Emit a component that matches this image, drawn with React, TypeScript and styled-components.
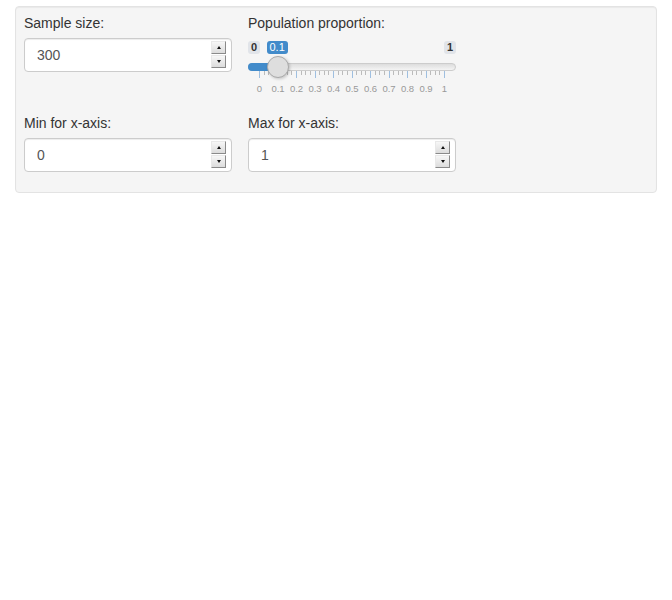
import React from "react";
import styled, { createGlobalStyle } from "styled-components";

const GlobalStyle = createGlobalStyle`
  html, body {
    margin: 0;
    padding: 0;
    background: #ffffff;
    font-family: "Liberation Sans", Arial, sans-serif;
    color: #333333;
  }
`;

const Page = styled.div`
  padding: 6px 15px 0 15px;
`;

const Well = styled.div`
  background: #f5f5f5;
  border: 1px solid #e3e3e3;
  border-radius: 4px;
  padding: 6px 8px 20px 8px;
  box-shadow: inset 0 1px 1px rgba(0, 0, 0, 0.05);
`;

const Grid = styled.div`
  display: grid;
  grid-template-columns: 208px 208px;
  column-gap: 16px;
  row-gap: 18px;
`;

const Field = styled.div`
  display: flex;
  flex-direction: column;
`;

const Label = styled.label`
  font-size: 14px;
  line-height: 20px;
  margin-bottom: 5px;
  color: #333;
`;

const InputBox = styled.div`
  position: relative;
  height: 34px;
  box-sizing: border-box;
  border: 1px solid #cccccc;
  border-radius: 4px;
  background: #fff;
  box-shadow: inset 0 1px 1px rgba(0, 0, 0, 0.075);
  display: flex;
  align-items: center;
`;

const Input = styled.input`
  border: none;
  outline: none;
  background: transparent;
  font: 14px "Liberation Sans", Arial, sans-serif;
  color: #555;
  padding: 0 12px;
  width: 100%;
  height: 100%;
  box-sizing: border-box;
`;

const Spinner = styled.div`
  position: absolute;
  right: 5px;
  top: 2px;
  display: flex;
  flex-direction: column;
  gap: 1px;
`;

const SpinBtn = styled.div<{ $down?: boolean }>`
  width: 15px;
  height: 13px;
  box-sizing: border-box;
  background: linear-gradient(#f7f7f7, #dcdcdc);
  border-top: 1px solid #e8e8e8;
  border-left: 1px solid #e8e8e8;
  border-right: 1px solid #8a8a8a;
  border-bottom: 1px solid #8a8a8a;
  display: flex;
  align-items: center;
  justify-content: center;

  &::after {
    content: "";
    width: 0;
    height: 0;
    border-left: 2px solid transparent;
    border-right: 2px solid transparent;
    ${(p) =>
      p.$down
        ? "border-top: 3px solid #111;"
        : "border-bottom: 3px solid #111;"}
  }
`;

const Slider = styled.div`
  position: relative;
  height: 57px;
  width: 208px;
`;

const Bubble = styled.span<{ $active?: boolean }>`
  position: absolute;
  top: 3px;
  height: 13px;
  line-height: 13px;
  padding: 0 3px;
  font-size: 11px;
  border-radius: 3px;
  background: ${(p) => (p.$active ? "#428bca" : "#e1e4e9")};
  color: ${(p) => (p.$active ? "#fff" : "#333")};
  font-weight: ${(p) => (p.$active ? "normal" : "bold")};
`;

const Track = styled.div`
  position: absolute;
  top: 25px;
  left: 0;
  right: 0;
  height: 8px;
  box-sizing: border-box;
  border: 1px solid #cccccc;
  border-radius: 4px;
  background: linear-gradient(#dddddd, #f4f4f4);
`;

const Bar = styled.div`
  position: absolute;
  top: 25px;
  left: 0;
  height: 8px;
  border-radius: 4px 0 0 4px;
  background: #428bca;
`;

const Handle = styled.div`
  position: absolute;
  top: 18px;
  width: 22px;
  height: 22px;
  box-sizing: border-box;
  border-radius: 50%;
  border: 1px solid #aaaaaa;
  background: #dedede;
  box-shadow: 1px 1px 3px rgba(0, 0, 0, 0.2);
`;

const Tick = styled.span<{ $major?: boolean }>`
  position: absolute;
  top: 33px;
  width: 1px;
  height: ${(p) => (p.$major ? 7 : 4)}px;
  background: ${(p) => (p.$major ? "#9fbfe0" : "#bbbbbb")};
`;

const TickText = styled.span`
  position: absolute;
  top: 45px;
  width: 30px;
  margin-left: -15px;
  text-align: center;
  font-size: 9.5px;
  line-height: 11px;
  color: #999999;
`;

const NumberField = ({ label, value }: { label: string; value: string }) => (
  <Field>
    <Label>{label}</Label>
    <InputBox>
      <Input type="text" defaultValue={value} />
      <Spinner>
        <SpinBtn />
        <SpinBtn $down />
      </Spinner>
    </InputBox>
  </Field>
);

const GRID_START = 11;
const GRID_END = 196;
const pos = (v: number) => GRID_START + (GRID_END - GRID_START) * v;

const ProportionSlider = ({ value }: { value: number }) => {
  const ticks = [];
  for (let i = 0; i <= 40; i++) {
    const major = i % 4 === 0;
    ticks.push(
      <Tick key={i} $major={major} style={{ left: Math.round(pos(i / 40)) }} />
    );
  }
  const labels = [];
  for (let i = 0; i <= 10; i++) {
    labels.push(
      <TickText key={i} style={{ left: pos(i / 10) + 0.5 }}>
        {i === 0 ? "0" : i === 10 ? "1" : (i / 10).toFixed(1)}
      </TickText>
    );
  }
  const x = pos(value);
  return (
    <Slider>
      <Bubble style={{ left: 0 }}>0</Bubble>
      <Bubble style={{ right: 0 }}>1</Bubble>
      <Bubble $active style={{ left: x - 11 }}>
        {value}
      </Bubble>
      <Track />
      <Bar style={{ width: x }} />
      {ticks}
      {labels}
      <Handle style={{ left: x - 11 }} />
    </Slider>
  );
};

export default function App() {
  return (
    <Page>
      <GlobalStyle />
      <Well>
        <Grid>
          <NumberField label="Sample size:" value="300" />
          <Field>
            <Label>Population proportion:</Label>
            <ProportionSlider value={0.1} />
          </Field>
          <NumberField label="Min for x-axis:" value="0" />
          <NumberField label="Max for x-axis:" value="1" />
        </Grid>
      </Well>
    </Page>
  );
}
